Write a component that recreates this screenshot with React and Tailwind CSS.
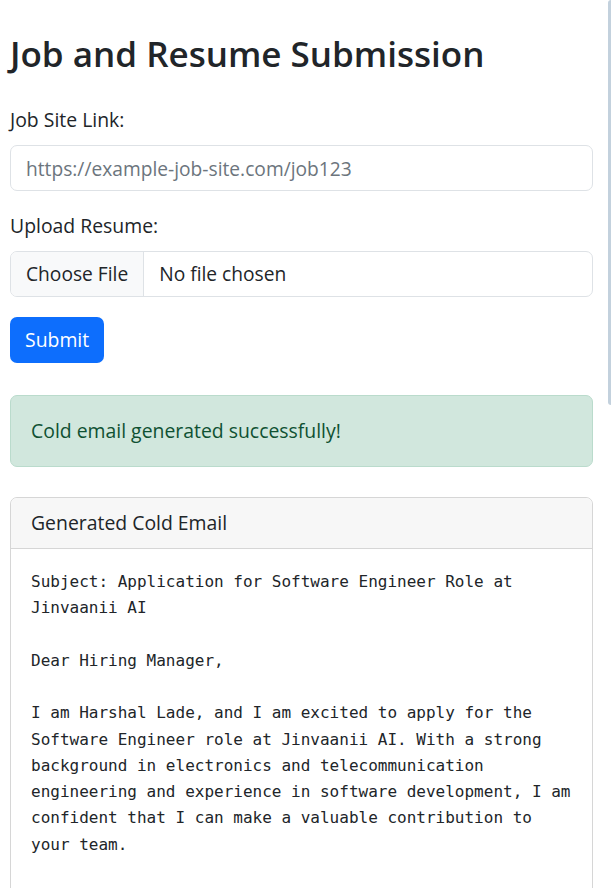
const emailText = `Subject: Application for Software Engineer Role at Jinvaanii AI

Dear Hiring Manager,

I am Harshal Lade, and I am excited to apply for the Software Engineer role at Jinvaanii AI. With a strong background in electronics and telecommunication engineering and experience in software development, I am confident that I can make a valuable contribution to your team.`;

const App = () => {
  return (
    <div
      className="relative w-full h-[888px] overflow-hidden bg-white text-[#212529]"
      style={{ fontFamily: '"Open Sans", "Noto Sans", sans-serif' }}
    >
      {/* scrollbar thumb */}
      <div className="absolute right-0 top-0 w-[3px] h-[405px] rounded-l-sm bg-[#c3d1dd]" />

      <div className="w-[583px] ml-[10px] pt-[32px]">
        <h1 className="text-[35px] leading-[43px] font-semibold mb-[30px]">
          Job and Resume Submission
        </h1>

        <form onSubmit={(e) => e.preventDefault()}>
          <div className="mb-[20px]">
            <label className="block text-[19.4px] leading-[30px] mb-[10px]">Job Site Link:</label>
            <input
              type="text"
              placeholder="https://example-job-site.com/job123"
              className="block w-full h-[46px] px-[15px] text-[19.2px] border border-[#dee2e6] rounded-[7px] placeholder:text-[#6c757d] outline-none"
            />
          </div>

          <div className="mb-[20px]">
            <label className="block text-[19.4px] leading-[30px] mb-[10px]">Upload Resume:</label>
            <div className="flex h-[46px] border border-[#dee2e6] rounded-[7px] overflow-hidden text-[19.2px]">
              <div className="flex items-center px-[15px] bg-[#f8f9fa] border-r border-[#dee2e6]">
                Choose File
              </div>
              <div className="flex items-center px-[15px]">No file chosen</div>
            </div>
          </div>

          <button
            type="submit"
            className="h-[46px] px-[15px] bg-[#0d6efd] text-white text-[19.4px] rounded-[7px]"
          >
            Submit
          </button>
        </form>

        <div className="mt-[32px] px-[20px] py-[20px] bg-[#d1e7dd] border border-[#badbcc] rounded-[7px] text-[#0f5132] text-[19.4px] leading-[30px]">
          Cold email generated successfully!
        </div>

        <div className="mt-[30px] min-h-[460px] border border-[#d6d6d6] rounded-[7px]">
          <div className="px-[20px] py-[10px] bg-[#f7f7f7] border-b border-[#d6d6d6] rounded-t-[7px] text-[19.4px] leading-[30px]">
            Generated Cold Email
          </div>
          <div className="p-[20px]">
            <pre
              className="whitespace-pre-wrap text-[16px] leading-[26.25px] text-[#212529]"
              style={{ fontFamily: '"DejaVu Sans Mono", "Liberation Mono", monospace' }}
            >
              {emailText}
            </pre>
          </div>
        </div>
      </div>
    </div>
  );
};

export default App;
